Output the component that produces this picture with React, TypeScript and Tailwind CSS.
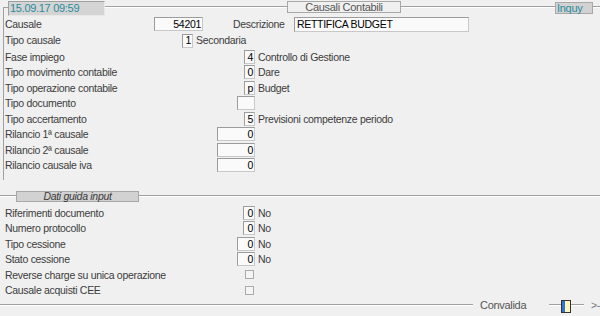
import React from 'react';

const line = 'h-0 border-t border-b border-t-[#a0a0a0] border-b-white';

function Box({ value, w, align = 'right' }: { value?: string; w: string; align?: 'left' | 'right' }) {
  return (
    <div
      className={`${w} h-[14px] flex items-center bg-[#fafafa] border border-[#c8c8c8] border-t-[#9c9c9c] border-l-[#9c9c9c] text-black px-[1px] ${
        align === 'right' ? 'justify-end' : 'justify-start'
      }`}
    >
      {value}
    </div>
  );
}

function Row({
  label,
  value,
  w = 'w-[12px]',
  desc,
  h = 'h-[15.5px]',
}: {
  label: string;
  value?: string;
  w?: string;
  desc?: string;
  h?: string;
}) {
  return (
    <div className={`flex items-center ${h}`}>
      <div className="w-[251px] flex items-center justify-between pl-[1px]">
        <span className="text-[#3c3c3c]">{label}</span>
        <Box value={value} w={w} />
      </div>
      {desc && <span className="pl-[3px] text-[#3c3c3c]">{desc}</span>}
    </div>
  );
}

function CheckRow({ label }: { label: string }) {
  return (
    <div className="flex items-center h-[15.5px]">
      <div className="w-[251px] flex items-center justify-between pl-[1px]">
        <span className="text-[#3c3c3c]">{label}</span>
        <div className="w-[9px] h-[9px] mr-[1px] bg-[#f4f4f4] border border-[#ababab]" />
      </div>
    </div>
  );
}

export default function App() {
  return (
    <div className="w-[600px] h-[316px] bg-[#f0f0f0] overflow-hidden font-['Liberation_Sans',Arial,sans-serif] text-[10.5px] tracking-[-0.3px] leading-none select-none">
      {/* header */}
      <div className="flex h-[16px]">
        <div className="w-[3px]" />
        <div className="w-[5px] mt-[7px] h-[9px] border-t border-l border-[#a0a0a0]" />
        <div className="w-[97px] h-[15px] mt-[1px] bg-[#d4d4d4] border border-[#a0a0a0] border-b-[#e8e8e8] border-r-[#e8e8e8] text-[#2a8b9c] text-[11px] flex items-center pl-[1px]">
          15.09.17 09:59
        </div>
        <div className={`w-[182px] mt-[6px] ${line}`} />
        <div className="w-[114px] h-[12px] mt-[1px] border border-[#a8a8a8] bg-[#f0f0f0] text-[#555] text-[11px] flex items-center justify-center">
          Causali Contabili
        </div>
        <div className={`flex-1 mt-[6px] ${line}`} />
        <div className="w-[38px] h-[12px] mt-[2px] bg-[#d2d2d2] border border-[#a8a8a8] text-[#2a8b9c] text-[11px] flex items-center pl-[1px]">
          Inquy
        </div>
        <div className={`w-[7px] mt-[6px] ${line}`} />
      </div>

      {/* Causali section */}
      <div className="ml-[3px] border-l border-[#a0a0a0] pb-[7px]">
        <div className="flex items-center h-[16px] pt-[1px]">
          <div className="w-[199px] flex items-center justify-between pl-[1px]">
            <span className="text-[#3c3c3c]">Causale</span>
            <div className="h-[15px] flex">
              <Box value="54201" w="w-[49px]" />
            </div>
          </div>
          <span className="w-[91px] pl-[30px] text-[#3c3c3c]">Descrizione</span>
          <div className="w-[175px] h-[15px] flex items-center bg-[#fafafa] border border-[#c8c8c8] border-t-[#9c9c9c] border-l-[#9c9c9c] text-black pl-[2px]">
            RETTIFICA BUDGET
          </div>
        </div>
        <div className="flex items-center h-[16px] pt-[1px]">
          <div className="w-[189px] flex items-center justify-between pl-[1px]">
            <span className="text-[#3c3c3c]">Tipo causale</span>
            <Box value="1" w="w-[11px]" />
          </div>
          <span className="pl-[3px] text-[#3c3c3c]">Secondaria</span>
        </div>
        <div className="mt-[1px]">
          <Row label="Fase impiego" value="4" w="w-[11px]" desc="Controllo di Gestione" />
          <Row label="Tipo movimento contabile" value="0" w="w-[11px]" desc="Dare" />
          <Row label="Tipo operazione contabile" value="p" w="w-[11px]" desc="Budget" />
          <Row label="Tipo documento" w="w-[18px]" />
          <Row label="Tipo accertamento" value="5" w="w-[11px]" desc="Previsioni competenze periodo" />
          <Row label="Rilancio 1ª causale" value="0" w="w-[38px]" />
          <Row label="Rilancio 2ª causale" value="0" w="w-[38px]" />
          <Row label="Rilancio causale iva" value="0" w="w-[38px]" />
        </div>
      </div>

      {/* Dati guida input */}
      <div className="flex items-center h-[12px] mt-[10px]">
        <div className={`w-[16px] ${line}`} />
        <div className="w-[123px] h-[11px] bg-[#d2d2d2] border border-[#a8a8a8] text-[#3a3a3a] italic flex items-center justify-center">
          Dati guida input
        </div>
        <div className={`flex-1 ${line}`} />
      </div>
      <div className="mt-[3px] pl-[4px]">
        <Row label="Riferimenti documento" value="0" desc="No" />
        <Row label="Numero protocollo" value="0" desc="No" />
        <Row label="Tipo cessione" value="0" w="w-[18px]" desc="No" />
        <Row label="Stato cessione" value="0" w="w-[18px]" desc="No" />
        <CheckRow label="Reverse charge su unica operazione" />
        <CheckRow label="Causale acquisti CEE" />
      </div>

      {/* bottom */}
      <div className="flex items-center h-[14px]">
        <div className={`w-[477px] ${line}`} />
        <span className="ml-[7px] text-[#555] text-[11px]">Convalida</span>
        <div className={`ml-[23px] w-[12px] ${line}`} />
        <div className="w-[10px] h-[13px] mt-[3px] border border-[#333] flex">
          <div className="w-[3px] bg-[#2f74d0]" />
          <div className="flex-1 bg-[#fff6b8]" />
        </div>
        <div className={`w-[13px] ${line}`} />
        <span className="ml-[7px] text-[#777]">&gt;-</span>
      </div>
    </div>
  );
}
